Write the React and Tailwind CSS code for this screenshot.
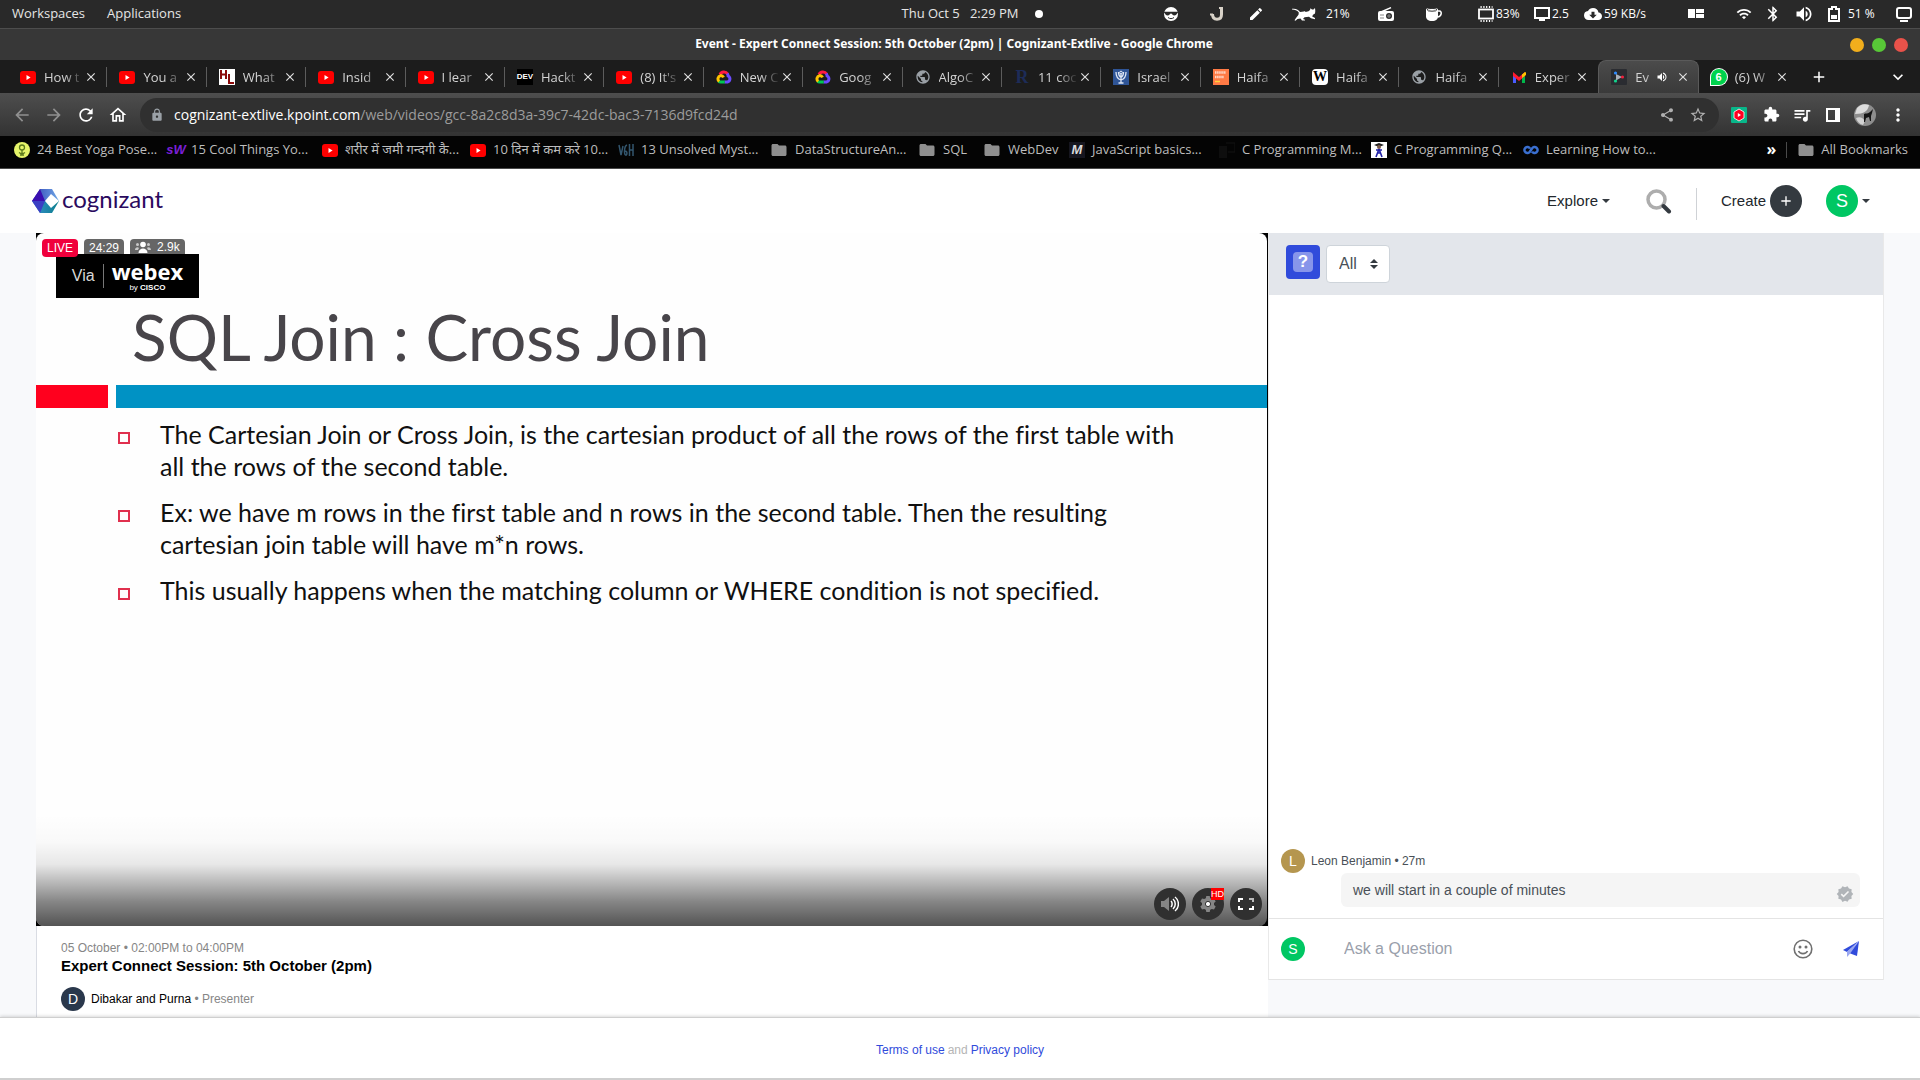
import React from "react";
import {
  MdArrowBack, MdArrowForward, MdRefresh, MdOutlineHome, MdLock, MdShare, MdStarBorder,
  MdExtension, MdQueueMusic, MdMoreVert, MdFolder, MdPublic, MdClose, MdAdd, MdVolumeUp,
  MdVerified, MdEdit, MdBluetooth, MdWifi, MdKeyboardArrowDown, MdCloudDownload,
} from "react-icons/md";

/* ---------- small drawings ---------- */

const YouTube = () => (
  <svg viewBox="0 0 16 16" className="size-4 shrink-0">
    <rect x="0" y="2" width="16" height="13" rx="3" fill="#ff0000" />
    <path d="M6.5 6 10.6 8.500l-4.1 2.400z" fill="#fff" />
  </svg>
);
const Cloud = () => (
  <svg viewBox="0 0 16 16" className="size-4 shrink-0" fill="none" strokeWidth="3">
    <path d="M4 5.6A4.3 4.3 0 0 1 11.6 5" stroke="#ff1a44" />
    <path d="M11.3 4.6c.6 1 .7 1.6.8 2.4A3.2 3.2 0 0 1 11.5 13H8.5" stroke="#6a4bff" />
    <path d="M8.7 13H4.6c-.8 0-1.5-.3-2-.8" stroke="#00c853" />
    <path d="M3.2 12.4A3.3 3.3 0 0 1 4.6 6.6c1.5 0 2.4.7 3 1.8" stroke="#ffc400" />
  </svg>
);
const HL = () => (
  <svg viewBox="0 0 16 16" className="size-4 shrink-0">
    <rect width="16" height="16" fill="#fff" />
    <path d="M2 1v9M7 1v9M2 5.5h5M10 5v9h5" stroke="#8b0a0a" strokeWidth="2" fill="none" />
  </svg>
);
const Dev = () => (
  <span className="flex size-4 shrink-0 items-center justify-center bg-black font-['Liberation_Sans'] text-[8px] leading-4 font-bold text-white">DEV</span>
);
const LetterR = () => (
  <span className="flex size-4 shrink-0 items-center justify-center font-['Liberation_Serif'] text-[18px] leading-4 font-bold text-[#1d2c58]">R</span>
);
const Emblem = () => (
  <svg viewBox="0 0 16 16" className="size-4 shrink-0" fill="none" stroke="#dfe7f5">
    <rect width="16" height="16" fill="#2f5597" stroke="none" />
    <path d="M3 3c0 5 1.500 7 5 8 3.500-1 5-3 5-8M5.500 3c0 3 .8 4.500 2.500 5.500C9.700 7.500 10.500 6 10.500 3M8 5v9M5.500 14h5" strokeWidth="1.300" />
    <circle cx="8" cy="3.500" r="1.300" />
  </svg>
);
const Tourist = () => (
  <svg viewBox="0 0 16 16" className="size-4 shrink-0">
    <rect width="16" height="16" fill="#ff7a45" />
    <path d="M2 3.500h11M2 8h9" stroke="#ffd9c8" strokeWidth="2.500" strokeDasharray="1.500 .6" />
    <path d="M2 12.500h5" stroke="#ffd23c" strokeWidth="1.500" />
  </svg>
);
const Wiki = () => (
  <span className="flex size-4 shrink-0 items-center justify-center rounded-sm bg-white font-['Liberation_Serif'] text-[14px] leading-4 font-bold text-black">W</span>
);
const Globe = () => <MdPublic className="size-4 shrink-0 text-[#9aa0a6]" />;
const Gmail = () => (
  <svg viewBox="0 0 16 16" className="size-4 shrink-0">
    <path d="M2 4v10H5V7z" fill="#4a5cff" />
    <path d="M14 4v10h-3V7z" fill="#00b84a" />
    <path d="M2 3l6 5 6-5v4l-6 5-6-5z" fill="#ff1a2e" />
    <path d="M11 5.500 14 3a1 1 0 0 1 1 1v2l-4 3z" fill="#ffc400" />
  </svg>
);
const KPoint = () => (
  <svg viewBox="0 0 16 16" className="size-4 shrink-0">
    <rect width="16" height="16" rx="1" fill="#2a2c31" />
    <path d="M5 5 11 8l-6 3.500z" fill="#aab0b8" />
    <circle cx="4.500" cy="4" r="1.600" fill="#2d8cff" />
    <circle cx="11.500" cy="8" r="1.600" fill="#f0213c" />
    <circle cx="4.500" cy="12" r="1.600" fill="#13d38b" />
  </svg>
);
const WhatsApp = () => (
  <span className="flex size-4 shrink-0 items-center justify-center rounded-full rounded-bl-sm bg-[#00d34d] font-['Liberation_Sans'] text-[11px] leading-4 font-bold text-white ring-1 ring-white">6</span>
);

const Yoga = () => (
  <svg viewBox="0 0 16 16" className="size-4 shrink-0" fill="none" stroke="#5c7a1c" strokeWidth="1.300">
    <circle cx="8" cy="8" r="8" fill="#e6f56a" stroke="none" />
    <circle cx="8" cy="5.500" r="2.500" />
    <path d="M8 8v5M5 10.500c2 1.500 4 1.500 6 0M6 13h4" />
  </svg>
);
const SW = () => (
  <span className="flex size-4 shrink-0 items-center justify-center font-['Liberation_Sans'] text-[13px] leading-4 font-bold text-[#7a1fd6] italic">sW</span>
);
const WH = () => (
  <svg viewBox="0 0 16 16" className="size-4 shrink-0" fill="none" stroke="#33566e" strokeWidth="1.500">
    <path d="M1 3l2 10L5 4M9 3C6 4 6 12 7.500 13S10 9 7 9M11.500 2v12M15 2v12M11.500 8H15" />
  </svg>
);
const Folder = () => <MdFolder className="size-[18px] shrink-0 text-[#8f8f8f]" />;
const LetterM = () => (
  <span className="flex size-4 shrink-0 items-center justify-center bg-[#16161f] font-['Liberation_Sans'] text-[13px] leading-4 font-bold text-[#dcdcdc] italic">M</span>
);
const DarkIcon = () => (
  <svg viewBox="0 0 16 16" className="size-4 shrink-0">
    <path d="M7 1h9v9H9" stroke="#121212" fill="none" />
    <rect y="4" width="8" height="12" fill="#0e0e0e" />
  </svg>
);
const Figure = () => (
  <svg viewBox="0 0 16 16" className="size-4 shrink-0">
    <rect width="16" height="16" fill="#fff" />
    <path d="M3 3 8 1l5 2-5 2z" fill="#222" />
    <circle cx="8" cy="5" r="2" fill="#7a5a4a" />
    <path d="M8 7 5 15M8 7l3 8M6 11h4M5 8h6" stroke="#2222a8" strokeWidth="1.600" />
  </svg>
);
const Infinity8 = () => (
  <svg viewBox="0 0 16 16" className="size-4 shrink-0" fill="none" stroke="#3a6fd0" strokeWidth="2.500">
    <path d="M7 6.500A3 3 0 1 0 7 9.500L9 6.500A3 3 0 1 1 9 9.500" />
  </svg>
);

const Ninja = () => (
  <svg viewBox="0 0 14 14" className="size-[14px]">
    <circle cx="7" cy="7" r="7" fill="#fff" />
    <path d="M0 4.800h14v1c-1 0-1 2.700-3.500 2.700C8.500 8.500 8 6.500 7 6.500S5.500 8.500 3.500 8.500C1 8.500 1 5.800 0 5.800z" fill="#2b2b2b" />
    <path d="M4 10.500c2 1.500 4 1.500 6 0" stroke="#2b2b2b" fill="none" />
  </svg>
);
const HookU = () => (
  <svg viewBox="0 0 14 14" className="size-[14px]" fill="none" stroke="#d8d2c8">
    <path d="M11.500 0v7.500C11.500 11 9.500 12.200 7 12.200 4.500 12.200 2.500 11 2.500 7" strokeWidth="3" />
    <path d="M9 1h4M0 7.500h3" strokeWidth="2" />
  </svg>
);
const Cat = () => (
  <svg viewBox="0 0 24 14" className="h-[14px] w-6" fill="#fff">
    <path d="M0 1.800C4 1.200 6.500 2.600 8 5c3-.6 6 0 8.500-.8L18 3l.5-1.800L20 2.500h1.500L23 1l.3 3-.3 2.500-2 1.300-.8 1.700L23 11v1.200l-4-1-2-1.500-4.500.6L11 12l2 .8v.8h-3l-1.500-2L5.500 12l-2 1.800-1-.5L4 11l2.500-3.200.3-2.300C5 3.500 3 2.600 0 2.600z" />
  </svg>
);
const RadioIcon = () => (
  <svg viewBox="0 0 16 14" className="h-[14px] w-4">
    <path d="M3 5 13 .6" stroke="#fff" strokeWidth="1.400" />
    <rect y="4" width="16" height="10" rx="2" fill="#fff" />
    <circle cx="11" cy="9" r="3" fill="#2b2b2b" />
    <path d="M2 8h4M2 11h4M9 9h4M11 7v4" stroke="#888" />
  </svg>
);
const Cup = () => (
  <svg viewBox="0 0 16 14" className="h-[14px] w-4">
    <path d="M0 2.500C0 .5 12 .5 12 2.500v7C12 12 10 14 6 14S0 12 0 9.500z" fill="#fff" />
    <ellipse cx="6" cy="2.800" rx="4.800" ry="1.400" fill="none" stroke="#2b2b2b" />
    <path d="M12 4h1.500c2.500 0 2.500 5-1.500 6" stroke="#fff" strokeWidth="1.500" fill="none" />
  </svg>
);
const Chip = () => (
  <svg viewBox="0 0 16 16" className="size-4" fill="none" stroke="#fff">
    <rect x="1" y="3.500" width="14" height="9" strokeWidth="1.800" />
    <path d="M2.500 1h12M2.500 15h12" strokeWidth="2" strokeDasharray="1.200 1.600" />
  </svg>
);
const Monitor = () => (
  <svg viewBox="0 0 16 14" className="h-[14px] w-4" fill="none" stroke="#fff">
    <rect x="1" y="1" width="14" height="10" strokeWidth="2" />
    <path d="M5 13h6" strokeWidth="2" />
  </svg>
);
const Tiles = () => (
  <svg viewBox="0 0 16 10" className="h-[10px] w-4" fill="#fff">
    <rect y="0" width="7" height="9" /><rect x="8" width="8" height="4" /><rect x="8" y="5" width="8" height="4" />
  </svg>
);
const Battery = () => (
  <svg viewBox="0 0 12 16" className="h-4 w-3">
    <path d="M1 3h3V1h4v2h3v12H1z" fill="none" stroke="#fff" strokeWidth="2" />
    <rect x="3" y="9" width="6" height="4" fill="#fff" />
  </svg>
);
const Screen = () => (
  <svg viewBox="0 0 16 16" className="size-4" fill="none" stroke="#fff" strokeWidth="2">
    <rect x="1" y="2" width="14" height="10" rx="2" /><path d="M4 15h8" />
  </svg>
);
const Caret = () => (
  <svg viewBox="0 0 8 4" className="h-1 w-2" fill="#343a40"><path d="M0 0h8L4 4z" /></svg>
);

/* ---------- system bar ---------- */

function SystemBar() {
  return (
    <div className="grid h-[29px] grid-cols-[1fr_auto_1fr] items-center border-b border-[#4d4d4d] bg-[#292929] text-[13px] text-[#e6e6e6]">
      <nav className="flex gap-[22px] pl-3">
        <button>Workspaces</button>
        <button>Applications</button>
      </nav>
      <div className="relative">
        <time className="whitespace-pre">Thu Oct 5   2:29 PM</time>
        <span className="absolute top-1.5 left-full ml-4 size-2 rounded-full bg-white" />
      </div>
      <div className="flex items-center justify-end pr-2 text-[12px] whitespace-nowrap text-white">
        <Ninja />
        <span className="ml-8"><HookU /></span>
        <MdEdit className="ml-6 size-4" />
        <span className="ml-7"><Cat /></span>
        <span className="ml-2.5 w-7">21%</span>
        <span className="ml-6"><RadioIcon /></span>
        <span className="ml-8"><Cup /></span>
        <span className="ml-9"><Chip /></span>
        <span className="ml-0.5 w-9">83%</span>
        <span className="ml-0.5"><Monitor /></span>
        <span className="ml-0.5 w-8">2.5</span>
        <MdCloudDownload className="size-[18px]" />
        <span className="ml-0.5 w-14">59 KB/s</span>
        <span className="ml-7"><Tiles /></span>
        <MdWifi className="ml-8 size-4" />
        <MdBluetooth className="ml-3 size-[18px]" />
        <MdVolumeUp className="ml-3 size-5" />
        <span className="ml-3.5"><Battery /></span>
        <span className="ml-2 w-9">51 %</span>
        <span className="ml-3"><Screen /></span>
      </div>
    </div>
  );
}

function TitleBar() {
  return (
    <div className="grid h-[31px] grid-cols-[1fr_auto_1fr] items-center bg-[#373737] pr-3">
      <span />
      <h1 className="pb-0.5 font-['Noto_Sans',sans-serif] text-[12px] font-bold text-white">
        Event - Expert Connect Session: 5th October (2pm) | Cognizant-Extlive - Google Chrome
      </h1>
      <div className="flex justify-end gap-2">
        <button aria-label="Minimize" className="size-[14px] rounded-full bg-[#f2ae1c]" />
        <button aria-label="Maximize" className="size-[14px] rounded-full bg-[#58c837]" />
        <button aria-label="Close window" className="size-[14px] rounded-full bg-[#e9524a]" />
      </div>
    </div>
  );
}

/* ---------- browser ---------- */

const tabs = [
  [YouTube, "How t"], [YouTube, "You a"], [HL, "What"], [YouTube, "Insid"], [YouTube, "I lear"],
  [Dev, "Hackt"], [YouTube, "(8) It's"], [Cloud, "New C"], [Cloud, "Goog"], [Globe, "AlgoC"],
  [LetterR, "11 coc"], [Emblem, "Israel"], [Tourist, "Haifa"], [Wiki, "Haifa"], [Globe, "Haifa"],
  [Gmail, "Exper"], [KPoint, "Ev", true], [WhatsApp, "(6) W"],
];

function TabStrip() {
  return (
    <div className="flex h-[33px] items-center bg-[#1c1c1c] pl-2">
      {tabs.map(([Icon, label, active], i) => (
        <div
          key={i}
          className={
            active
              ? "flex h-full min-w-0 flex-1 items-center rounded-t-lg border border-b-0 border-[#5a5a5a] bg-linear-to-b from-[#4b4b4b] to-[#3a3a3a] pr-2 pl-3"
              : i === 15 || i === 17
                ? "flex h-5 min-w-0 flex-1 items-center border-r border-transparent pr-2 pl-3"
                : "flex h-5 min-w-0 flex-1 items-center border-r border-[#5c5c5c] pr-2 pl-3"
          }
        >
          <Icon />
          <span className="ml-2 flex-1 overflow-hidden mask-r-from-50% text-[13px] leading-5 whitespace-nowrap text-[#d4d4d4]">{label}</span>
          {active && <MdVolumeUp className="mr-2 size-3 shrink-0 text-white" />}
          <button aria-label="Close tab" className="shrink-0 text-[#e0e0e0]"><MdClose className="size-3.5" /></button>
        </div>
      ))}
      <div className="flex w-[122px] shrink-0 items-center justify-between pr-3 pl-3 text-white">
        <button aria-label="New tab"><MdAdd className="size-[18px]" /></button>
        <button aria-label="Search tabs"><MdKeyboardArrowDown className="size-5" /></button>
      </div>
    </div>
  );
}

function Toolbar() {
  return (
    <div className="flex h-[43px] items-center bg-linear-to-b from-[#4e4e4e] to-[#333333] pr-3 pl-3 text-white">
      <div className="flex gap-3">
        <button aria-label="Back"><MdArrowBack className="size-5 text-[#909090]" /></button>
        <button aria-label="Forward"><MdArrowForward className="size-5 text-[#909090]" /></button>
        <button aria-label="Reload"><MdRefresh className="size-5" /></button>
        <button aria-label="Home"><MdOutlineHome className="size-5" /></button>
      </div>
      <div className="ml-3 flex h-[34px] flex-1 items-center rounded-full bg-[#303030] px-2.5">
        <MdLock className="size-3.5 text-[#9aa0a6]" />
        <div role="textbox" aria-label="Address" className="ml-2.5 flex-1 text-[14px] text-[#9c9c9c]">
          <span className="text-white">cognizant-extlive.kpoint.com</span>/web/videos/gcc-8a2c8d3a-39c7-42dc-bac3-7136d9fcd24d
        </div>
        <button aria-label="Share"><MdShare className="size-4 text-[#b0b0b0]" /></button>
        <button aria-label="Bookmark" className="mr-0.5 ml-3.5"><MdStarBorder className="size-[18px] text-[#b0b0b0]" /></button>
      </div>
      <div className="ml-3 flex items-center">
        <button aria-label="Video extension">
          <svg viewBox="0 0 16 16" className="size-4">
            <rect width="16" height="16" rx="1" fill="#08b78a" />
            <path d="M8 2l5 3v6l-5 3-5-3V5z" fill="#ff0022" stroke="#fff" strokeWidth=".8" />
            <path d="M6.800 6 10 8l-3.200 2z" fill="#fff" />
          </svg>
        </button>
        <button aria-label="Extensions" className="ml-4"><MdExtension className="size-[17px]" /></button>
        <button aria-label="Media" className="ml-3"><MdQueueMusic className="size-5" /></button>
        <button aria-label="Side panel" className="ml-3.5">
          <svg viewBox="0 0 14 14" className="size-3.5"><path d="M1 1h12v12H1z" fill="none" stroke="#fff" strokeWidth="2" /><path d="M9 1h4v12H9z" fill="#fff" /></svg>
        </button>
        <button aria-label="Profile" className="ml-3.5">
          <svg viewBox="0 0 22 22" className="size-[22px]">
            <circle cx="11" cy="11" r="11" fill="#8d8d8d" />
            <path d="M3 4a11 11 0 0 1 12-3c-1 6-5 9-14 9z" fill="#dcdcdc" />
            <path d="M2 14c4-2 7 0 9 3l-2 4C5 20 3 17 2 14z" fill="#d2d2d2" />
            <path d="M10 10c2-1 4 0 6-2l3-3-1 4-1 3v5h-1l-1-4-3 1-1 4h-1v-5z" fill="#151515" />
          </svg>
        </button>
        <button aria-label="Menu" className="ml-3"><MdMoreVert className="size-5" /></button>
      </div>
    </div>
  );
}

const bookmarks = [
  [Yoga, "24 Best Yoga Pose...", "w-[154px]"],
  [SW, "15 Cool Things Yo...", "w-[154px]"],
  [YouTube, "शरीर में जमी गन्दगी कै...", "w-[148px]"],
  [YouTube, "10 दिन में कम करे 10...", "w-[148px]"],
  [WH, "13 Unsolved Myst...", "w-[152px]"],
  [Folder, "DataStructureAn...", "w-[148px]"],
  [Folder, "SQL", "w-[65px]"],
  [Folder, "WebDev", "w-[86px]"],
  [LetterM, "JavaScript basics...", "w-[150px]"],
  [DarkIcon, "C Programming M...", "w-[152px]"],
  [Figure, "C Programming Q...", "w-[152px]"],
  [Infinity8, "Learning How to...", "w-[148px]"],
];

function BookmarksBar() {
  return (
    <div className="flex h-[33px] items-center border-b border-[#4a4a4a] bg-[#040404] pr-3 pb-1 pl-3.5 text-[13px] text-[#bdbdbd]">
      {bookmarks.map(([Icon, label, width]) => (
        <a key={label} href="#" className={`flex shrink-0 items-center gap-[7px] whitespace-nowrap ${width}`}>
          <Icon />
          {label}
        </a>
      ))}
      <button aria-label="More bookmarks" className="ml-auto pb-0.5 text-[16px] leading-4 font-bold text-white">»</button>
      <span className="mx-2.5 h-4 w-px bg-[#4a4a4a]" />
      <button className="flex items-center gap-1.5"><Folder />All Bookmarks</button>
    </div>
  );
}

/* ---------- site ---------- */

function SiteHeader() {
  return (
    <header className="flex h-16 items-center bg-white pr-[50px] pl-8 text-[15px] text-[#22272c]">
      <a href="#" className="flex items-center gap-[3px]" aria-label="cognizant home">
        <svg viewBox="0 0 27 24" className="h-6 w-[27px]">
          <defs>
            <linearGradient id="hexTop" x1="0" y1="0" x2="1" y2="0"><stop offset="0" stopColor="#2f3fb4" /><stop offset="1" stopColor="#6fa8e6" /></linearGradient>
            <linearGradient id="hexLow" x1="0" y1="0" x2="1" y2="0"><stop offset="0" stopColor="#3a8fd0" /><stop offset="1" stopColor="#0a7f8c" /></linearGradient>
          </defs>
          <path d="M8 0h12l7 12H0z" fill="url(#hexTop)" />
          <path d="M0 12h27l-7 12H8z" fill="url(#hexLow)" />
          <path d="M8 0 13 12H0z" fill="#3a0fb0" />
          <path d="M0 12h13L8 24z" fill="#3b3fc4" />
          <path d="M13 12 19 5l8 7-8 7z" fill="#fff" />
        </svg>
        <span className="pb-1 font-['Lato',sans-serif] text-[24px] leading-6 text-[#2a0a5e]">cognizant</span>
      </a>
      <nav className="ml-auto flex items-center">
        <button className="flex items-center gap-1">Explore <Caret /></button>
        <button aria-label="Search" className="ml-9">
          <svg viewBox="0 0 26 26" className="size-[26px]" fill="none">
            <circle cx="10.500" cy="11.500" r="8.500" stroke="#adadad" strokeWidth="3.500" />
            <path d="m17.500 18 5.500 5.500" stroke="#343a40" strokeWidth="4" strokeLinecap="round" />
          </svg>
        </button>
        <span className="mx-6 mt-1.5 h-8 w-px bg-[#cfd2d6]" />
        <button className="flex items-center gap-1">
          Create
          <span className="flex size-8 items-center justify-center rounded-full bg-[#343a40] text-white"><MdAdd className="size-4" /></span>
        </button>
        <button className="ml-6 flex items-center gap-1">
          <span className="flex size-8 items-center justify-center rounded-full bg-[#00c763] text-[18px] text-white">S</span>
          <Caret />
        </button>
      </nav>
    </header>
  );
}

const points = [
  ["The Cartesian Join or Cross Join, is the cartesian product of all the rows of the first table with", "all the rows of the second table."],
  ["Ex: we have m rows in the first table and n rows in the second table. Then the resulting", "cartesian join table will have m*n rows."],
  ["This usually happens when the matching column or WHERE condition is not specified."],
];

function VideoPlayer() {
  return (
    <div className="relative aspect-video overflow-hidden bg-black pr-px">
      <div className="h-full overflow-hidden rounded-lg bg-[#fefefe] pt-[21px]">
        <div className="ml-5 flex h-[44px] w-[143px] items-center justify-center gap-2 bg-black text-white">
          <span className="text-[16px] text-[#d8d8d8]">Via</span>
          <span className="h-6 w-px bg-[#777]" />
          <span className="flex flex-col items-center">
            <b className="font-['Open_Sans',sans-serif] text-[22px] leading-6">webex</b>
            <span className="text-[8px] leading-[10px]">by <b>CISCO</b></span>
          </span>
        </div>
        <h2 className="mt-[7px] ml-24 font-['Lato',sans-serif] text-[64px] leading-[64px] whitespace-nowrap text-[#48454a]">
          SQL Join : Cross Join
        </h2>
        <div className="mt-4 flex h-[23px] gap-2">
          <span className="w-[72px] bg-[#ff001e]" />
          <span className="flex-1 bg-[#0092c4]" />
        </div>
        <ul className="flex flex-col gap-[14px] pt-2.5 pl-[82px] font-['Lato',sans-serif] text-[25px] leading-8 [font-variant-ligatures:none] whitespace-nowrap text-[#101010]">
          {points.map((lines) => (
            <li key={lines[0]} className="flex gap-[30px]">
              <span className="mt-3.5 size-3 shrink-0 border-2 border-[#e0304e]" />
              <p>{lines.map((l) => <span key={l} className="block">{l}</span>)}</p>
            </li>
          ))}
        </ul>
      </div>
      <div className="absolute inset-x-0 bottom-0 h-28 rounded-b-lg bg-[linear-gradient(to_bottom,transparent,rgba(0,0,0,0.02)_25%,rgba(0,0,0,0.09)_45%,rgba(0,0,0,0.33)_66%,rgba(0,0,0,0.47)_78%,rgba(0,0,0,0.67))]" />
      <div className="absolute top-1.5 left-1.5 flex gap-1.5 text-[12px] leading-[18px] text-white">
        <span className="rounded bg-[#f0003c] px-[5px]">LIVE</span>
        <span className="h-[15px] rounded-t bg-[#666666] px-[5px]">24:29</span>
        <span className="flex h-[15px] items-center gap-1.5 rounded-t bg-[#666666] px-[5px]">
          <svg viewBox="0 0 16 12" className="h-3 w-4" fill="#fff">
            <circle cx="8" cy="3.500" r="2.800" /><path d="M3.500 12c0-6 9-6 9 0z" />
            <g fill="#c8c8c8"><circle cx="2.500" cy="3.500" r="1.500" /><circle cx="13.500" cy="3.500" r="1.500" /><path d="M0 9c0-3 3-3.500 4-2L3 9zM16 9c0-3-3-3.500-4-2l1 2z" /></g>
          </svg>
          2.9k
        </span>
      </div>
      <div className="absolute right-1.5 bottom-1.5 flex gap-1.5 text-white">
        <button aria-label="Volume" className="flex size-8 items-center justify-center rounded-full bg-[#303030]">
          <svg viewBox="0 0 18 16" className="h-4 w-[18px]" fill="none" stroke="#fff" strokeWidth="1.500">
            <path d="M0 5h3l5-4v14l-5-4H0z" fill="#858585" stroke="none" />
            <path d="M10 5c1.500 1.500 1.500 4.500 0 6M12 3c3 2.500 3 7.500 0 10M14 1c4.500 3.500 4.500 10.500 0 14" />
          </svg>
        </button>
        <button aria-label="Settings, HD" className="relative flex size-8 items-center justify-center rounded-full bg-[#303030]">
          <svg viewBox="0 0 16 16" className="size-4">
            <path d="M6.300 0h3.400l.5 2.200 1.600.9L14 2.400l1.700 3L14 7v2l1.700 1.600-1.700 3-2.200-.7-1.600.9-.5 2.200H6.300l-.5-2.200-1.600-.9-2.200.7-1.700-3L2 9V7L.3 5.400l1.700-3 2.200.7 1.600-.9z" fill="#858585" />
            <circle cx="8" cy="8" r="2.600" fill="#fff" stroke="#303030" />
          </svg>
          <span className="absolute top-0 right-0 bg-[#ff0000] text-[9px] leading-3">HD</span>
        </button>
        <button aria-label="Full screen" className="flex size-8 items-center justify-center rounded-full bg-[#303030]">
          <svg viewBox="0 0 16 12" className="h-3 w-4" fill="none" strokeWidth="2">
            <path d="M5 1H1v3M1 8v3h4M15 8v3h-4" stroke="#fff" /><path d="M11 1h4v3" stroke="#bbb" />
          </svg>
        </button>
      </div>
    </div>
  );
}

function SessionInfo() {
  return (
    <section className="flex-1 border-l border-[#d9dce3] bg-white px-6 pt-[13px] pb-1.5 text-[12px]">
      <p className="leading-[18px] text-[#868686]">05 October • 02:00PM to 04:00PM</p>
      <h2 className="text-[15px] leading-[18px] font-bold text-black">Expert Connect Session: 5th October (2pm)</h2>
      <div className="mt-3 flex items-center gap-1.5">
        <span className="flex size-6 items-center justify-center rounded-full bg-[#2a384c] text-[14px] text-white">D</span>
        <p className="text-black">Dibakar and Purna <span className="text-[#868686]">• Presenter</span></p>
      </div>
    </section>
  );
}

function ChatPanel() {
  return (
    <aside className="mb-[37px] flex flex-col border-x border-[#e9e9e9] bg-white">
      <div className="flex h-[62px] items-start gap-1.5 bg-[#e3e6eb] pt-3 pl-[17px]">
        <button aria-label="Questions" className="flex size-[34px] items-center justify-center rounded bg-[#304bdb]">
          <span className="flex size-5 items-center justify-center rounded-sm bg-[#8795ea] text-[17px] font-bold text-white">?</span>
        </button>
        <div className="relative">
          <select aria-label="Filter questions" className="h-[38px] w-16 appearance-none rounded border border-[#ced4da] bg-white pl-3 text-[16px] text-[#495057]">
            <option>All</option>
          </select>
          <svg viewBox="0 0 8 10" className="pointer-events-none absolute top-3.5 right-3 h-2.5 w-2" fill="#343a40"><path d="M0 4h8L4 0zM0 6h8l-4 4z" /></svg>
        </div>
      </div>
      <div className="flex flex-1 flex-col justify-end pr-[23px] pb-[11px] pl-3">
        <div className="flex items-center gap-1.5 text-[12px] text-[#495057]">
          <span className="flex size-6 items-center justify-center rounded-full bg-[#b5964f] text-[14px] text-white">L</span>
          Leon Benjamin • 27m
        </div>
        <div className="ml-[60px] flex h-[34px] items-center justify-between rounded-md bg-[#f5f5f5] pr-1.5 pl-3 text-[14px] text-[#495057]">
          we will start in a couple of minutes
          <MdVerified className="mt-2 size-[18px] text-[#b0b4b8]" />
        </div>
      </div>
      <form className="flex h-[62px] items-center border-y border-[#e4e4e4] pr-6 pl-3">
        <span className="flex size-6 items-center justify-center rounded-full bg-[#00c763] text-[14px] text-white">S</span>
        <input aria-label="Ask a Question" placeholder="Ask a Question" className="ml-[39px] flex-1 text-[16px] outline-none placeholder:text-[#9aa0ab]" />
        <button type="button" aria-label="Emoji" className="mr-[30px]">
          <svg viewBox="0 0 20 20" className="size-5" fill="none" stroke="#707070" strokeWidth="1.600">
            <circle cx="10" cy="10" r="8.800" /><circle cx="7" cy="8" r=".7" fill="#707070" /><circle cx="13" cy="8" r=".7" fill="#707070" />
            <path d="M5.500 12c1.500 3.500 7.500 3.500 9 0" />
          </svg>
        </button>
        <button type="submit" aria-label="Send">
          <svg viewBox="0 0 16 16" className="size-4"><path d="M16 0 0 9l4 2z" fill="#304bdb" /><path d="M16 0 6 12l8 3z" fill="#304bdb" /><path d="M16 0 4 10.500V16l3-3.200z" fill="#9aa7f0" /></svg>
        </button>
      </form>
    </aside>
  );
}

export default function App() {
  return (
    <div className="flex min-h-screen flex-col bg-[#f8f9fb] font-['Open_Sans','Noto_Sans',sans-serif]">
      <SystemBar />
      <TitleBar />
      <TabStrip />
      <Toolbar />
      <BookmarksBar />
      <div className="flex flex-1 flex-col font-['Liberation_Sans',sans-serif]">
        <SiteHeader />
        <main className="grid flex-1 grid-cols-[2fr_1fr] px-9">
          <div className="flex min-w-0 flex-col">
            <VideoPlayer />
            <SessionInfo />
          </div>
          <ChatPanel />
        </main>
        <footer className="flex h-[63px] items-center justify-center gap-[3px] border-t border-b-2 border-[#cfcfcf] bg-white pt-1 text-[12px] text-[#b5b5b5] shadow-[0_-1px_3px_rgba(0,0,0,0.15)]">
          <a href="#" className="text-[#304bdb]">Terms of use</a>
          and
          <a href="#" className="text-[#304bdb]">Privacy policy</a>
        </footer>
      </div>
    </div>
  );
}
